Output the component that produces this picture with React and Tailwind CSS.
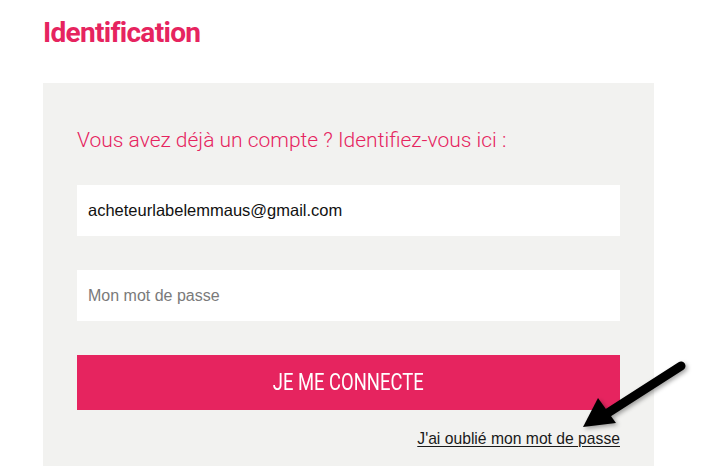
import React from "react";

export default function App() {
  return (
    <div className="relative w-[702px] h-[466px] bg-white overflow-hidden">
      <div className="pl-[43px] pt-[19px] h-[83px]">
        <h1 className="text-[28px] leading-none font-bold tracking-[-0.7px] text-[#e6245f] [font-family:'Roboto',sans-serif]">
          Identification
        </h1>
      </div>
      <div className="ml-[43px] w-[611px] h-[400px] bg-[#f2f2f0] px-[34px] pt-[47px]">
        <p className="text-[21px] leading-none font-light text-[#e6245f] [font-family:'Roboto',sans-serif]">
          Vous avez déjà un compte ? Identifiez-vous ici :
        </p>
        <div className="mt-[34px] flex flex-col gap-[34px]">
          <div className="h-[51px] bg-white flex items-center pl-[11px] text-[16.5px] text-[#111] [font-family:'Liberation_Sans','Roboto',sans-serif]">
            acheteurlabelemmaus@gmail.com
          </div>
          <div className="h-[51px] bg-white flex items-center pl-[11px] text-[16px] text-[#7a7a7a] [font-family:'Liberation_Sans','Roboto',sans-serif]">
            Mon mot de passe
          </div>
          <div className="h-[55px] bg-[#e6245f] flex items-center justify-center text-white [font-family:'Roboto',sans-serif]">
            <span className="inline-block text-[23px] leading-none scale-x-[0.8]">JE ME CONNECTE</span>
          </div>
        </div>
        <div className="mt-[21px] flex justify-end">
          <a className="text-[15.7px] leading-none text-[#1a1a1a] underline underline-offset-2 [font-family:'Liberation_Sans','Roboto',sans-serif]">
            J'ai oublié mon mot de passe
          </a>
        </div>
      </div>
      <svg className="absolute left-0 top-0" width="702" height="466" viewBox="0 0 702 466">
        <defs>
          <filter id="sh" x="-20%" y="-20%" width="140%" height="140%">
            <feDropShadow dx="2" dy="2" stdDeviation="2" floodColor="#000" floodOpacity="0.35" />
          </filter>
        </defs>
        <g filter="url(#sh)">
          <line x1="681" y1="366" x2="603" y2="416" stroke="#000" strokeWidth="9" strokeLinecap="round" />
          <polygon points="583,427 598,398 616,423" fill="#000" />
        </g>
      </svg>
    </div>
  );
}
